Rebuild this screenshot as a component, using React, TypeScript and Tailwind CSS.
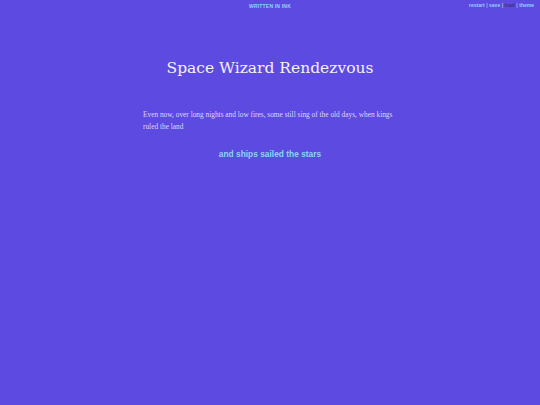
export default function App() {
  return (
    <div className="min-h-[405px] w-full bg-[#5d4ae1] relative font-['Liberation_Sans',sans-serif]">
      <div className="flex justify-center pt-[3px]">
        <span className="text-[5px] font-bold tracking-[0.2px] text-[#8fd3ff] leading-[6px]">WRITTEN IN INK</span>
      </div>
      <div className="absolute right-[6px] top-[2px] text-[5px] font-bold leading-[6px] text-[#8fd3ff] flex gap-[1.5px]">
        <span>restart</span><span className="text-[#b9b3f0]">|</span><span>save</span><span className="text-[#b9b3f0]">|</span><span className="text-[#3d3570]">load</span><span className="text-[#b9b3f0]">|</span><span>theme</span>
      </div>
      <div className="flex flex-col items-center">
        <h1 className="mt-[49px] text-[15.5px] leading-[20px] text-[#f4f1ff] font-['DejaVu_Serif',serif]">Space Wizard Rendezvous</h1>
        <div className="mt-[31px] w-[254px] font-['Liberation_Serif',serif] text-[7.35px] leading-[12px] text-[#ddd6f6]">
          Even now, over long nights and low fires, some still sing of the old days, when kings ruled the land
        </div>
        <div className="mt-[15px] text-[8.4px] font-bold text-[#8fd3ff] leading-[12px]">and ships sailed the stars</div>
      </div>
    </div>
  );
}
